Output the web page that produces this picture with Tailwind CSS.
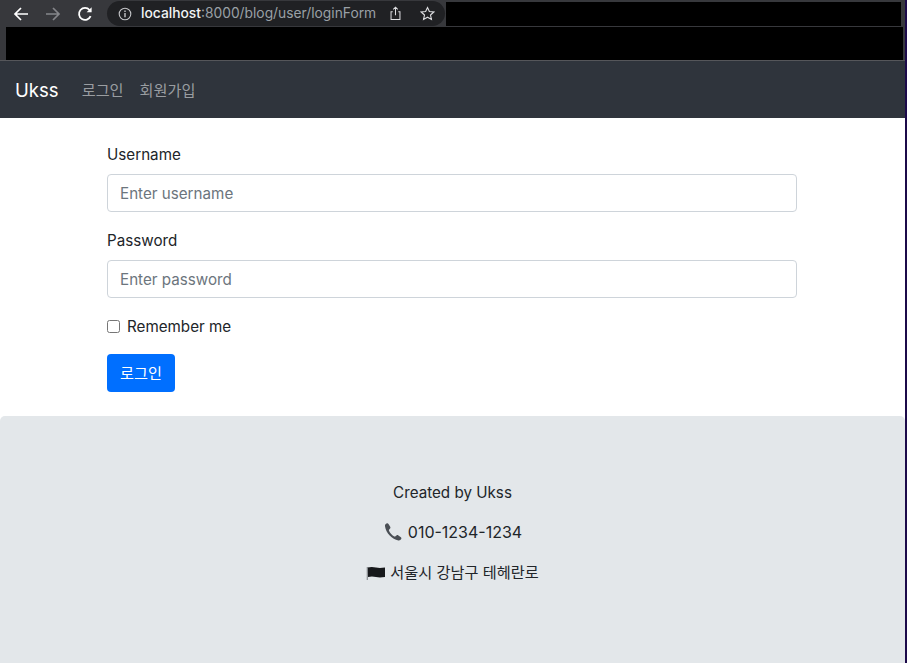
<!DOCTYPE html>
<html lang="ko">
<head>
    <meta charset="UTF-8" />
    <title>Login</title>
    <script src="https://cdn.jsdelivr.net/npm/@tailwindcss/browser@4"></script>
</head>
<body class="h-[663px] w-[907px] overflow-hidden bg-[#1c0a4a] font-['Inter','Noto_Sans_CJK_KR',sans-serif] text-[15.2px] leading-6 text-[#212529]">
<div class="w-[905px] h-[663px] bg-white flex flex-col">

    <!-- browser chrome -->
    <div class="h-[61px] shrink-0 bg-[#37383c] border-b border-[#55565a] flex flex-col">
        <div class="h-[26px] flex items-center pt-px">
            <button aria-label="Back" class="ml-[13px] w-4 h-4 text-white">
                <svg viewBox="0 0 16 16" class="w-4 h-4" fill="none" stroke="currentColor" stroke-width="1.7"><path d="M15 8H2M8 2 2 8l6 6"/></svg>
            </button>
            <button aria-label="Forward" class="ml-4 w-4 h-4 text-[#85868a]">
                <svg viewBox="0 0 16 16" class="w-4 h-4" fill="none" stroke="currentColor" stroke-width="1.7"><path d="M1 8h13M8 2l6 6-6 6"/></svg>
            </button>
            <button aria-label="Reload" class="ml-[16px] w-4 h-4 text-white">
                <svg viewBox="0 0 16 16" class="w-4 h-4" fill="none" stroke="currentColor" stroke-width="1.8"><path d="M13.6 10.2A6 6 0 1 1 12.6 4"/><path d="M14.6 1.2v5h-5z" fill="currentColor" stroke="none"/></svg>
            </button>
            <div class="ml-[14px] w-[338px] h-[25px] rounded-full bg-[#202124] flex items-center text-[13.8px] leading-none">
                <svg viewBox="0 0 14 14" class="ml-[11px] w-[14px] h-[14px] text-[#c4c5c8]" fill="none" stroke="currentColor" stroke-width="1.1"><circle cx="7" cy="7" r="5.8"/><path d="M7 6v4.2M7 3.6v1.3" stroke-width="1.4"/></svg>
                <span class="ml-[9px] whitespace-nowrap font-medium text-[#f1f3f4]">localhost<span class="font-normal text-[#9aa0a6]">:8000/blog/user/loginForm</span></span>
                <svg viewBox="0 0 14 16" class="ml-auto w-[13px] h-[15px] text-[#dcdde0]" fill="none" stroke="currentColor" stroke-width="1.1"><path d="M4 6H2.200v8.500h9.600V6H10M7 10V1.500M4.600 3.600 7 1.200l2.400 2.400"/></svg>
                <svg viewBox="0 0 16 16" class="ml-[18px] mr-[10px] w-[15px] h-[15px] text-[#dcdde0]" fill="none" stroke="currentColor" stroke-width="1.2"><path d="m8 1.600 2 4.300 4.700.5-3.500 3.200 1 4.700L8 12l-4.200 2.300 1-4.700L1.300 6.400 6 5.900z"/></svg>
            </div>
            <div class="ml-px w-[455px] h-6 bg-black"></div>
        </div>
        <div class="ml-[6px] mt-px w-[897px] h-[33px] bg-black"></div>
    </div>

    <!-- navbar -->
    <nav class="h-[57px] shrink-0 bg-[#2f343c] flex items-center px-[15px]">
        <a href="#" class="text-[18.6px] leading-[30px] text-white mr-[23px]">Ukss</a>
        <a href="#" class="pt-[2px] text-[#9a9da1] mr-4">로그인</a>
        <a href="#" class="pt-[2px] text-[#9a9da1]">회원가입</a>
    </nav>

    <!-- login form -->
    <main class="h-[298px] shrink-0 w-[690px] ml-[107px] pt-6">
        <form>
            <div class="mb-4">
                <label for="username" class="block h-6 pt-px mb-2">Username</label>
                <input id="username" type="text" placeholder="Enter username" class="block w-full h-[38px] px-3 border border-[#ced4da] rounded placeholder:text-[#6c757d]" />
            </div>
            <div class="mb-4">
                <label for="password" class="block h-6 pt-px mb-2">Password</label>
                <input id="password" type="password" placeholder="Enter password" class="block w-full h-[38px] px-3 border border-[#ced4da] rounded placeholder:text-[#6c757d]" />
            </div>
            <label class="flex items-center h-6 mb-4">
                <input type="checkbox" class="w-[13px] h-[13px] mr-[7px]" />
                <span class="pt-[2px]">Remember me</span>
            </label>
            <button type="button" class="block w-[68px] h-[38px] pt-[2px] bg-[#006fff] text-white rounded">로그인</button>
        </form>
    </main>

    <!-- footer -->
    <footer class="flex-1 bg-[#e3e7ea] rounded-t-[5px] flex flex-col items-center pt-16">
        <p class="h-6 pt-px mb-4">Created by Ukss</p>
        <p class="mb-4 flex items-center gap-[5px] text-base">
            <svg viewBox="0 0 20 20" class="w-[20px] h-[20px]"><path d="M3.500 1.600c-1 .5-1.700 1.300-1.500 2.700.5 3.400 2.200 6.600 4.700 9.200 2.500 2.500 5.500 4.500 8.700 5 1.300.2 2.200-.4 2.800-1.400.4-.7.300-1.300-.3-1.800l-2.500-1.900c-.7-.5-1.300-.5-1.900 0l-1 .9c-.4.300-.8.300-1.200.1-1.100-.6-2.200-1.500-3.100-2.500-.9-1-1.700-2.100-2.200-3.200-.2-.4-.1-.8.200-1.100l.9-1c.5-.6.500-1.200.1-1.900L5.500 2c-.5-.7-1.200-.8-2-.4z" fill="#4a4f55"/></svg>
            010-1234-1234
        </p>
        <p class="flex items-center gap-[4px]">
            <svg viewBox="0 0 20 16" class="w-[20px] h-4"><path d="M1 2.500c4-.8 6.500-.6 9 0s5 .6 9 0v9.500c-4 .6-6.500.6-9 0s-5-.8-8 0z" fill="#17191b"/><path d="M1.300 2v13" stroke="#8b8f93" stroke-width="1.200"/></svg>
            <span class="pt-px">서울시 강남구 테헤란로</span>
        </p>
    </footer>
</div>
</body>
</html>
